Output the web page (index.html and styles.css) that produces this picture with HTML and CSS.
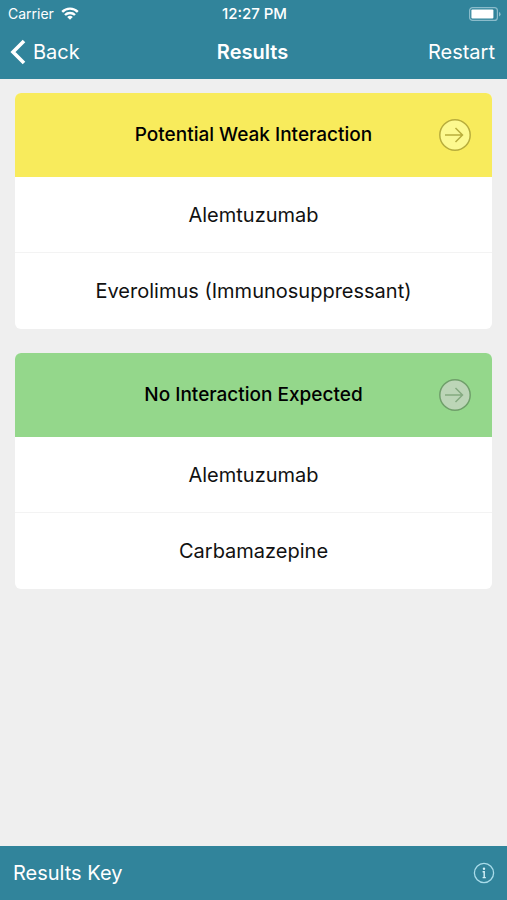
FILE: index.html
```html
<!DOCTYPE html>
<html lang="en">
<head>
<meta charset="utf-8">
<meta name="viewport" content="width=device-width, initial-scale=1">
<title>Results</title>
<link rel="stylesheet" href="styles.css">
</head>
<body>
<header class="top">
  <div class="status">
    <span class="carrier">Carrier
      <svg width="18" height="13" viewBox="0 0 18 13" aria-hidden="true"><g fill="none" stroke="#fff" stroke-width="2.400"><path d="M1.200 4.900a11 11 0 0 1 15.600 0"/><path d="M4 8a7.100 7.100 0 0 1 10 0"/></g><path d="M9 12.800 6.200 10a4 4 0 0 1 5.600 0z" fill="#fff"/></svg>
    </span>
    <span class="time">12:27 PM</span>
    <svg class="battery" width="32" height="14" viewBox="0 0 32 14" aria-hidden="true"><rect x=".6" y=".6" width="27.800" height="12.800" rx="3" fill="none" stroke="#8bbccb" stroke-width="1.200"/><rect x="2.400" y="2.400" width="22" height="9.200" rx="1" fill="#fff"/><path d="M30 5v4.400q1.600-.6 1.600-2.200T30 5z" fill="#8bbccb"/></svg>
  </div>
  <nav class="bar">
    <button class="link back" type="button"><svg width="16" height="26" viewBox="0 0 16 26" aria-hidden="true"><path d="M14 2 3 13l11 11" fill="none" stroke="#fff" stroke-width="3.600"/></svg>Back</button>
    <h1>Results</h1>
    <button class="link restart" type="button">Restart</button>
  </nav>
</header>
<main>
  <section class="card">
    <div class="head weak">
      <h2>Potential Weak Interaction</h2>
      <button class="go" type="button" aria-label="Weak interaction details"><svg width="32" height="32" viewBox="0 0 32 32"><circle cx="16" cy="16" r="15.200"/><path d="M6 16h17M16.500 9l7 7-7 7"/></svg></button>
    </div>
    <ul><li>Alemtuzumab</li><li>Everolimus (Immunosuppressant)</li></ul>
  </section>
  <section class="card">
    <div class="head none">
      <h2>No Interaction Expected</h2>
      <button class="go" type="button" aria-label="No interaction details"><svg width="32" height="32" viewBox="0 0 32 32"><circle cx="16" cy="16" r="15.200"/><path d="M6 16h17M16.500 9l7 7-7 7"/></svg></button>
    </div>
    <ul><li>Alemtuzumab</li><li>Carbamazepine</li></ul>
  </section>
</main>
<footer>
  <span>Results Key</span>
  <button class="link info" type="button" aria-label="Key information"><svg width="22" height="22" viewBox="0 0 22 22"><circle cx="11" cy="11" r="9.600" fill="none" stroke="#a9dcea" stroke-width="1.300"/><circle cx="11" cy="6.800" r="1.200" fill="#d5f1f8"/><path d="M9.600 9.700h1.600v5.600M9.600 15.600h3.200" fill="none" stroke="#d5f1f8" stroke-width="1.400"/></svg></button>
</footer>
</body>
</html>
```
FILE: styles.css
```css
* { box-sizing: border-box; }
body {
  margin: 0;
  min-height: 100vh;
  display: flex;
  flex-direction: column;
  background: #efefef;
  color: #111;
  font: 20px/24px Inter, "Liberation Sans", sans-serif;
}
svg { display: block; }
h1, h2, ul { margin: 0; padding: 0; }
button { padding: 0; border: 0; background: none; font: inherit; color: inherit; cursor: pointer; }
.top, footer { background: #31849b; color: #fff; }
.status, .bar {
  display: grid;
  grid-template-columns: 1fr auto 1fr;
  align-items: center;
}
.status { height: 27px; padding: 0 6px 0 8px; font-size: 14px; line-height: 16px; }
.carrier { display: flex; align-items: center; gap: 7px; }
.time { font-size: 15px; font-weight: 500; }
.battery { justify-self: end; }
.bar { height: 52px; padding: 0 12px 2px 10px; }
h1 { font-size: 20px; line-height: 24px; font-weight: 600; }
.link { display: flex; align-items: center; }
.back { gap: 7px; justify-self: start; }
.restart { justify-self: end; }
main {
  flex: 1;
  display: flex;
  flex-direction: column;
  gap: 24px;
  padding: 14px 15px 24px;
}
.card { border-radius: 6px; background: #fff; overflow: hidden; }
.head {
  min-height: 84px;
  padding: 0 21px;
  display: grid;
  grid-template-columns: 32px 1fr 32px;
  align-items: center;
}
h2 { grid-column: 2; text-align: center; font-size: 19px; line-height: 24px; font-weight: 500; color: #000; }
.go svg { fill: none; stroke-width: 1.5px; }
.weak { background: #f8eb5c; }
.weak circle { fill: #fcf98f; stroke: #b8ad3c; }
.weak path { stroke: #b8ad3c; }
.none { background: #94d78b; }
.none circle { fill: #bcd5b7; stroke: #6f9f6a; }
.none path { stroke: #84aa80; }
ul { list-style: none; }
li { min-height: 76px; padding: 0 16px; display: grid; place-items: center; text-align: center; }
li:not(:last-child) { border-bottom: 1px solid #f3f3f3; }
footer {
  min-height: 54px;
  padding: 0 12px 0 13px;
  display: flex;
  align-items: center;
  justify-content: space-between;
}
```
